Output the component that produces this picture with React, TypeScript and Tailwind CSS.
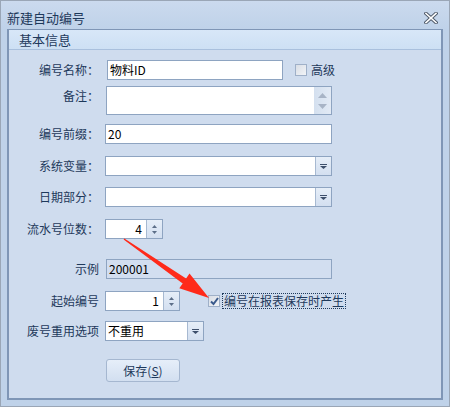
import React from 'react';

const font = "font-['Noto_Sans_CJK_SC','Liberation_Sans',sans-serif]";

function Label({ children }: { children: React.ReactNode }) {
  return (
    <div className="w-[90px] shrink-0 text-right text-[12px] leading-none text-[#1e395b]">{children}</div>
  );
}

function DropArrow() {
  return (
    <svg width="7" height="5" viewBox="0 0 7 5">
      <rect x="0" y="0" width="7" height="1" fill="#3d4f6b" />
      <path d="M0 2 H7 L3.5 5 Z" fill="#3d4f6b" />
    </svg>
  );
}

function Combo({ width, value }: { width: string; value?: string }) {
  return (
    <div className={`flex h-[20px] ${width} border border-[#8ea4c1] bg-white`}>
      <div className="flex flex-1 items-center pl-[2px] text-[12px] text-black">{value}</div>
      <div className="flex w-[16px] items-center justify-center border-l border-[#a7b9d1] bg-gradient-to-b from-[#e6eef8] to-[#d3dff0]">
        <DropArrow />
      </div>
    </div>
  );
}

function Spinner({ width, value }: { width: string; value: string }) {
  return (
    <div className={`flex h-[20px] ${width} border border-[#8ea4c1] bg-white`}>
      <div className="flex flex-1 items-center justify-end pr-[4px] text-[12px] text-black">{value}</div>
      <div className="flex w-[16px] flex-col items-center justify-center gap-[3px] border-l border-[#a7b9d1] bg-gradient-to-b from-[#e6eef8] to-[#d3dff0]">
        <svg width="5" height="3" viewBox="0 0 5 3">
          <path d="M0 3 L2.5 0 L5 3 Z" fill="#5c6e88" />
        </svg>
        <svg width="5" height="3" viewBox="0 0 5 3">
          <path d="M0 0 L5 0 L2.5 3 Z" fill="#5c6e88" />
        </svg>
      </div>
    </div>
  );
}

function CheckBox({ checked }: { checked?: boolean }) {
  return (
    <div className="flex h-[12px] w-[12px] items-center justify-center border border-[#9fb0c8] bg-gradient-to-br from-[#d9dee6] to-[#f2f4f7]">
      {checked && (
        <svg width="9" height="9" viewBox="0 0 9 9">
          <path d="M1 4.5 L3.5 7 L8 1" stroke="#3a5a8c" strokeWidth="2" fill="none" />
        </svg>
      )}
    </div>
  );
}

export default function App() {
  return (
    <div className={`relative h-[407px] w-[450px] overflow-hidden border border-[#9aa6b6] bg-[#bfd2e9] ${font}`}>
      {/* Title bar */}
      <div className="flex h-[28px] items-center justify-between bg-gradient-to-b from-[#cbdaee] to-[#bfd2e9] pl-[6px] pr-[11px] pt-[5px]">
        <span className="text-[13px] leading-none text-[#1e395b]">新建自动编号</span>
        <svg width="14" height="12" viewBox="0 0 14 12">
          <path d="M2 1.5 L12 10.5 M12 1.5 L2 10.5" stroke="#4d5868" strokeWidth="3.6" strokeLinecap="square" />
          <path d="M2 1.5 L12 10.5 M12 1.5 L2 10.5" stroke="#ffffff" strokeWidth="1.6" strokeLinecap="square" />
        </svg>
      </div>

      {/* Group panel */}
      <div className="ml-[6px] h-[371px] w-[436px] border-2 border-t border-[#7f96b6] bg-[#cfdcee]">
        <div className="flex h-[20px] items-center border-b border-[#a9c0dd] bg-gradient-to-b from-[#d8e7f8] to-[#cde0f4] pl-[10px] text-[13px] leading-none text-[#1e395b]">
          基本信息
        </div>

        <div className="flex flex-col">
          {/* 编号名称 */}
          <div className="mt-[10px] flex items-center">
            <Label>编号名称：</Label>
            <div className="ml-[8px] flex h-[20px] w-[176px] items-center border border-[#8ea4c1] bg-white pl-[2px] text-[12px] text-black">
              物料ID
            </div>
            <div className="ml-[12px]">
              <CheckBox />
            </div>
            <span className="ml-[4px] text-[12px] leading-none text-[#1e395b]">高级</span>
          </div>

          {/* 备注 */}
          <div className="mt-[6px] flex items-start">
            <div className="pt-[4px]">
              <Label>备注：</Label>
            </div>
            <div className="ml-[7px] flex h-[29px] w-[226px] border border-[#8ea4c1] bg-white">
              <div className="flex-1" />
              <div className="flex w-[17px] flex-col items-center justify-center gap-[6px] bg-gradient-to-r from-[#d4e0ef] to-[#e2eaf5]">
                <svg width="9" height="5" viewBox="0 0 9 5">
                  <path d="M0 5 L4.5 0 L9 5 Z" fill="#a8b4c6" />
                </svg>
                <svg width="9" height="5" viewBox="0 0 9 5">
                  <path d="M0 0 L9 0 L4.5 5 Z" fill="#a8b4c6" />
                </svg>
              </div>
            </div>
          </div>

          {/* 编号前缀 */}
          <div className="mt-[9px] flex items-center">
            <Label>编号前缀：</Label>
            <div className="ml-[6px] flex h-[20px] w-[227px] items-center border border-[#8ea4c1] bg-white pl-[2px] text-[12px] text-black">
              20
            </div>
          </div>

          {/* 系统变量 */}
          <div className="mt-[12px] flex items-center">
            <Label>系统变量：</Label>
            <div className="ml-[6px]">
              <Combo width="w-[227px]" />
            </div>
          </div>

          {/* 日期部分 */}
          <div className="mt-[11px] flex items-center">
            <Label>日期部分：</Label>
            <div className="ml-[6px]">
              <Combo width="w-[227px]" />
            </div>
          </div>

          {/* 流水号位数 */}
          <div className="mt-[12px] flex items-center">
            <Label>流水号位数：</Label>
            <div className="ml-[6px]">
              <Spinner width="w-[58px]" value="4" />
            </div>
          </div>

          {/* 示例 */}
          <div className="mt-[20px] flex items-center">
            <Label>示例</Label>
            <div className="ml-[7px] flex h-[20px] w-[226px] items-center border border-[#8ea4c1] bg-[#d2def0] pl-[2px] text-[12px] text-black">
              200001
            </div>
          </div>

          {/* 起始编号 */}
          <div className="mt-[12px] flex items-center">
            <Label>起始编号</Label>
            <div className="ml-[6px]">
              <Spinner width="w-[75px]" value="1" />
            </div>
            <div className="ml-[28px]">
              <CheckBox checked />
            </div>
            <span className="ml-[2px] flex h-[16px] items-center border border-dotted border-[#1e395b] px-[1px] text-[12px] leading-none text-[#1e395b]">
              编号在报表保存时产生
            </span>
          </div>

          {/* 废号重用选项 */}
          <div className="mt-[10px] flex items-center">
            <Label>废号重用选项</Label>
            <div className="ml-[6px]">
              <Combo width="w-[99px]" value="不重用" />
            </div>
          </div>

          {/* 保存 */}
          <div className="mt-[18px] flex">
            <div className="w-[90px] shrink-0" />
            <button className="ml-[7px] flex h-[23px] w-[74px] items-center justify-center rounded-[3px] border border-[#a5b7d0] bg-gradient-to-b from-[#e6eef9] to-[#d2dff0] text-[12px] text-[#1e395b]">
              保存(<span className="underline">S</span>)
            </button>
          </div>
        </div>
      </div>

      {/* Red annotation arrow */}
      <svg className="pointer-events-none absolute left-0 top-0" width="450" height="407" viewBox="0 0 450 407">
        <path
          d="M122.6 238.6 L181.7 282.4 L178.3 287.3 L208 297 L188.5 272.5 L185.1 277.4 L123.4 237.4 Z"
          fill="#ff2a1a"
        />
      </svg>
    </div>
  );
}
